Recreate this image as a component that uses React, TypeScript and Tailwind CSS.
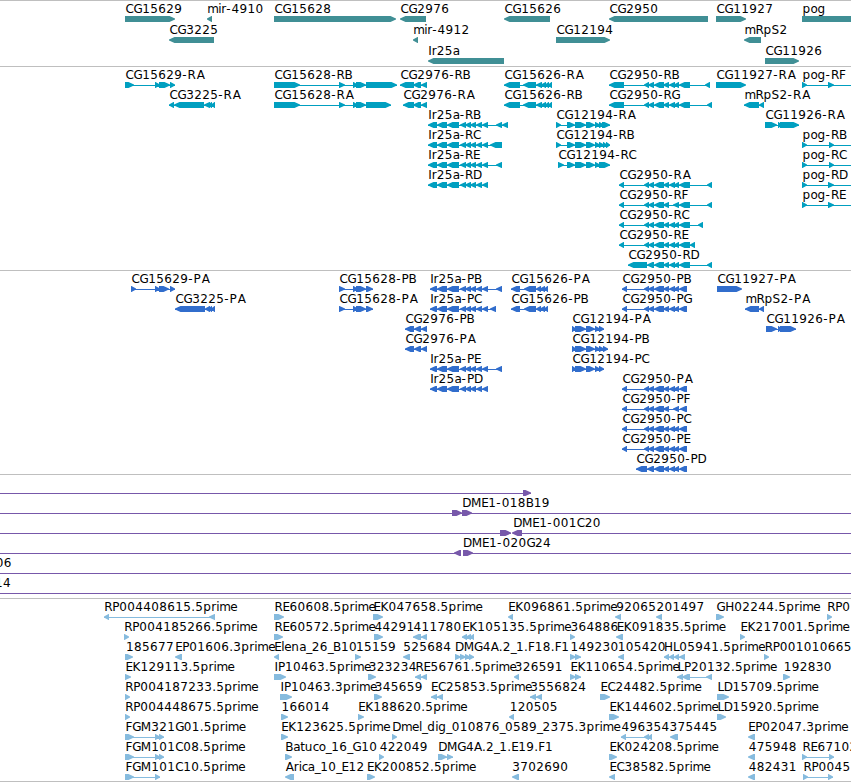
type Dir = 1 | -1;
type Span = [number, number];

interface Feature {
  row: number;
  label?: string;
  x: number;
  dir?: Dir;
  spans?: Span[];
  lines?: Span[];
}

interface TrackData {
  name: string;
  height: number;
  pitch: number;
  color: string;
  features: Feature[];
}

// parses "125-134 155-160" into spans
const parse = (s: string): Span[] =>
  s
    .split(" ")
    .filter(Boolean)
    .map((p) => p.split("-").map(Number) as Span);

const f = (row: number, label: string, x: number, dir: Dir, blocks: string): Feature => {
  const spans = parse(blocks);
  const lines: Span[] = spans.length > 1 ? [[spans[0][0], spans[spans.length - 1][1]]] : [];
  return { row, label, x, dir, spans, lines };
};

const IR = "437-447 447-459 460-466 465-471 470-476 476-482 482-488";
const CG2950 = "644-649 648-654 654-664 663-669 669-675 674-679 679-690";
const CG2950_RF = "644-649 648-654 654-664 663-669 673-679 679-690";
const CG2950_P = "644-649 648-654 654-664 663-669 669-675 674-679 679-687";
const CG2950_PF = "644-649 648-654 654-664 663-669 673-679 680-687";
const CG15626_R = "504-520 523-536 536-542 541-546 545-549 548-552";
const CG15626_P = "511-520 524-536 536-541 540-545 544-548";

const genes: Feature[] = [
  f(0, "CG15629", 125, 1, "125-175"),
  f(0, "mir-4910", 206.6, -1, "207-212"),
  f(0, "CG15628", 274, 1, "274-396"),
  f(0, "CG2976", 400, -1, "400-426"),
  f(0, "CG15626", 504, -1, "504-550"),
  f(0, "CG2950", 609, -1, "609-708"),
  f(0, "CG11927", 716, 1, "716-746"),
  f(0, "pog", 802, 1, "802-880"),
  f(1, "CG3225", 169, -1, "169-214"),
  f(1, "mir-4912", 412.6, -1, "413-418"),
  f(1, "CG12194", 556, 1, "556-610"),
  f(1, "mRpS2", 744, -1, "744-761"),
  f(2, "Ir25a", 427.7, -1, "428-504"),
  f(2, "CG11926", 765, 1, "765-799"),
];

const transcripts: Feature[] = [
  f(0, "CG15629-RA", 125, 1, "125-134 155-160 159-170 170-175"),
  f(0, "CG15628-RB", 274, 1, "274-300 339-345 353-358 356-366 366-397"),
  f(0, "CG2976-RB", 400, -1, "400-414 413-421 421-427"),
  f(0, "CG15626-RA", 504, -1, CG15626_R),
  f(0, "CG2950-RB", 609, -1, "609-624 " + CG2950 + " 705-710"),
  f(0, "CG11927-RA", 716, 1, "716-746"),
  f(0, "pog-RF", 802, 1, "802-807 828-834 870-880"),
  f(1, "CG3225-RA", 169, -1, "169-174 174-204 204-210 208-212 211-215"),
  f(1, "CG15628-RA", 274, 1, "274-300 339-345 353-358 356-366 366-391"),
  f(1, "CG2976-RA", 403, -1, "403-414 413-421 421-427"),
  f(1, "CG15626-RB", 504, -1, CG15626_R),
  f(1, "CG2950-RG", 609, -1, "609-624 " + CG2950 + " 707-712"),
  f(1, "mRpS2-RA", 744, -1, "744-759 759-764"),
  f(2, "Ir25a-RB", 427.7, -1, "428-437 " + IR + " 496-502 502-508"),
  f(2, "CG12194-RA", 556, 1, "556-561 567-575 575-586 586-595 595-600 599-604 602-610"),
  f(2, "CG11926-RA", 765, 1, "765-777 778-782 780-799"),
  f(3, "Ir25a-RC", 427.7, -1, "428-437 " + IR + " 490-502"),
  f(3, "CG12194-RB", 556, 1, "556-561 567-575 575-586 586-595 595-600 599-604 603-607 606-610"),
  f(3, "pog-RB", 802, 1, "802-807 829-834 870-880"),
  f(4, "Ir25a-RE", 427.7, -1, "428-437 " + IR + " 496-502"),
  f(4, "CG12194-RC", 558, 1, "558-564 567-575 575-586 586-595 595-600 599-610"),
  f(4, "pog-RC", 802, 1, "802-807 829-834 870-880"),
  f(5, "Ir25a-RD", 427.7, -1, "428-437 " + IR),
  f(5, "CG2950-RA", 619, -1, "619-624 " + CG2950 + " 707-712"),
  f(5, "pog-RD", 802, 1, "802-807 828-834 870-880"),
  f(6, "CG2950-RF", 619, -1, "619-624 " + CG2950_RF + " 707-712"),
  f(6, "pog-RE", 802, 1, "802-807 828-834 870-880"),
  f(7, "CG2950-RC", 619, -1, "619-624 " + CG2950 + " 698-703"),
  f(8, "CG2950-RE", 619, -1, "619-624 " + CG2950 + " 690-695"),
  f(9, "CG2950-RD", 628, -1, "628-647 647-654 654-664 663-669 669-675 674-679 679-690 707-712"),
];

const proteins: Feature[] = [
  f(0, "CG15629-PA", 131, 1, "131-136 155-160 159-169 170-175"),
  f(0, "CG15628-PB", 339, 1, "339-345 353-358 356-366 366-373"),
  f(0, "Ir25a-PB", 429.6, -1, "430-437 " + IR + " 496-502"),
  f(0, "CG15626-PA", 511, -1, CG15626_P),
  f(0, "CG2950-PB", 622, -1, "622-627 " + CG2950_P),
  f(0, "CG11927-PA", 717, 1, "717-742"),
  f(1, "CG3225-PA", 175, -1, "175-205 205-210 208-212 211-215"),
  f(1, "CG15628-PA", 339, 1, "339-345 353-358 356-366 366-373"),
  f(1, "Ir25a-PC", 429.6, -1, "430-437 " + IR + " 490-496"),
  f(1, "CG15626-PB", 511, -1, CG15626_P),
  f(1, "CG2950-PG", 622, -1, "622-627 " + CG2950_P),
  f(1, "mRpS2-PA", 745, -1, "745-759 759-764"),
  f(2, "CG2976-PB", 405, -1, "405-414 414-421 421-427"),
  f(2, "CG12194-PA", 572, 1, "572-576 575-586 586-595 595-600 599-604"),
  f(2, "CG11926-PA", 766, 1, "766-777 778-782 780-796"),
  f(3, "CG2976-PA", 405, -1, "405-414 414-421 421-427"),
  f(3, "CG12194-PB", 572, 1, "572-576 575-586 586-595 595-600 599-604 603-608"),
  f(4, "Ir25a-PE", 429.6, -1, "430-437 " + IR + " 496-502"),
  f(4, "CG12194-PC", 572, 1, "572-576 575-586 586-595 595-600 599-604"),
  f(5, "Ir25a-PD", 429.6, -1, "430-437 " + IR),
  f(5, "CG2950-PA", 622, -1, "622-627 " + CG2950_P),
  f(6, "CG2950-PF", 622, -1, "622-627 " + CG2950_PF),
  f(7, "CG2950-PC", 622, -1, "622-627 " + CG2950_P),
  f(8, "CG2950-PE", 622, -1, "622-627 " + CG2950_P),
  f(9, "CG2950-PD", 636, -1, "636-647 647-654 654-664 663-669 669-675 674-679 679-687"),
];

const clones: Feature[] = [
  { row: 0, x: 0, dir: 1, spans: [[523, 531]], lines: [[0, 531]] },
  { row: 1, label: "DME1-018B19", x: 461.6, dir: 1, spans: [[452, 462], [462, 472]], lines: [[0, 851]] },
  { row: 2, x: 0, dir: 1, spans: [[500, 511]], lines: [[0, 511]] },
  { row: 2, label: "DME1-001C20", x: 512.6, dir: -1, spans: [[512, 522]], lines: [[513, 851]] },
  { row: 3, x: 0, dir: -1, spans: [[454, 461]], lines: [[0, 461]] },
  { row: 3, label: "DME1-020G24", x: 462.4, dir: 1, spans: [[463, 473]], lines: [[463, 851]] },
  { row: 4, label: "06", x: -4.8, lines: [[0, 851]] },
  { row: 5, label: "14", x: -5.6, lines: [[0, 851]] },
];

const ests: Feature[] = [
  f(0, "RP004408615.5prime", 103.6, -1, "104-109 209-215"),
  f(0, "RE60608.5prime", 274, 1, "274-284"),
  f(0, "EK047658.5prime", 373, 1, "373-383"),
  f(0, "EK096861.5prime", 507.6, -1, "508-513"),
  f(0, "92065", 615.6, -1, "615-621"),
  f(0, "201497", 655.8, -1, "656-662"),
  f(0, "GH02244.5prime", 716, 1, "716-724"),
  f(0, "RP0", 826.6, 1, "827-832"),
  f(1, "RP004185266.5prime", 123.6, 1, "124-129"),
  f(1, "RE60572.5prime", 274, 1, "274-283"),
  f(1, "44291", 374, 1, "374-383"),
  f(1, "411780", 413, -1, "413-421 421-427"),
  f(1, "EK105135.5prime", 461.6, -1, "462-467 466-471 470-474"),
  f(1, "364886", 570, 1, "570-575"),
  f(1, "EK091835.5prime", 616.2, -1, "616-623"),
  f(1, "EK217001.5prime", 739.8, 1, "740-745"),
  f(2, "185677", 125.3, 1, "125-133"),
  f(2, "EP01606.3prime", 174.7, -1, "175-182"),
  f(2, "Elena_26_B10", 273.7, -1, "274-279"),
  f(2, "15159", 355.4, 1, "355-361"),
  f(2, "525684", 402.6, -1, "403-410"),
  f(2, "DMG4A.2_1.F18.F1", 454.4, 1, "455-461 460-466 465-470 469-474"),
  f(2, "149230", 570, 1, "570-576 575-581"),
  f(2, "105420", 617.2, -1, "618-624"),
  f(2, "HL05941.5prime", 663.4, -1, "664-669 669-674 674-679 679-685"),
  f(2, "RP001010665", 764.2, 1, "764-769"),
  f(3, "EK129113.5prime", 125, 1, "125-131"),
  f(3, "IP10463.5prime", 274, 1, "274-286"),
  f(3, "323234", 368.2, 1, "368-376"),
  f(3, "RE56761.5prime", 415, -1, "415-421 421-427"),
  f(3, "326591", 514.2, -1, "514-519"),
  f(3, "EK110654.5prime", 569.8, 1, "570-576 575-581"),
  f(3, "LP20132.5prime", 677, -1, "677-683 682-690 706-712"),
  f(3, "192830", 783.2, 1, "783-790"),
  f(4, "RP004187233.5prime", 124.7, 1, "125-130"),
  f(4, "IP10463.3prime", 280, 1, "280-292"),
  f(4, "345659", 374.2, 1, "374-382"),
  f(4, "EC25853.5prime", 430.4, -1, "431-437 437-443"),
  f(4, "3556824", 529.6, -1, "530-536 536-542"),
  f(4, "EC24482.5prime", 599.8, 1, "600-610"),
  f(4, "LD15709.5prime", 716.8, 1, "717-729"),
  f(5, "RP004448675.5prime", 124.7, 1, "125-130"),
  f(5, "166014", 281, 1, "281-288"),
  f(5, "EK188620.5prime", 357.7, 1, "358-364"),
  f(5, "120505", 509.2, -1, "509-514"),
  f(5, "EK144602.5prime", 609, 1, "609-619"),
  f(5, "LD15920.5prime", 716.8, 1, "717-726"),
  f(6, "FGM321G01.5prime", 125, 1, "125-134 155-160 159-164"),
  f(6, "EK123625.5prime", 280.6, 1, "281-288"),
  f(6, "Dmel_dig_010876_0589_2375.3prime", 391.6, 1, "392-397"),
  f(6, "496354", 621, -1, "621-626 644-649 648-652"),
  f(6, "375445", 669, -1, "670-678"),
  f(6, "EP02047.3prime", 747.6, -1, "748-755"),
  f(7, "FGM101C08.5prime", 125, 1, "125-134 155-160 159-164"),
  f(7, "Batuco_16_G10", 284.6, 1, "285-292"),
  f(7, "422049", 379.2, 1, "379-384"),
  f(7, "DMG4A.2_1.E19.F1", 437.6, 1, "438-447 447-453"),
  f(7, "EK024208.5prime", 609, 1, "609-617"),
  f(7, "475948", 748.2, -1, "748-755"),
  f(7, "RE67102", 801.8, 1, "802-807 829-834"),
  f(8, "FGM101C10.5prime", 125, 1, "125-134 155-160"),
  f(8, "Arica_10_E12", 285.2, -1, "285-294"),
  f(8, "EK200852.5prime", 366.4, 1, "367-375"),
  f(8, "3702690", 511.6, -1, "512-519"),
  f(8, "EC38582.5prime", 609, -1, "609-615"),
  f(8, "482431", 748.2, -1, "748-755"),
  f(8, "RP0045", 802.8, 1, "803-808 828-833"),
];

const tracks: TrackData[] = [
  { name: "Gene span", height: 66, pitch: 21, color: "#408f95", features: genes },
  { name: "Transcript", height: 204, pitch: 20, color: "#009fc0", features: transcripts },
  { name: "CDS", height: 204, pitch: 20, color: "#316dcc", features: proteins },
  { name: "Clones", height: 124, pitch: 20, color: "#7758aa", features: clones },
  { name: "ESTs", height: 184, pitch: 20, color: "#86bbde", features: ests },
];

// label advances in px, digits are all 8 wide
const ADV: Record<string, number> = {
  A: 8, B: 8, C: 8, D: 8.7, E: 7, F: 6.6, G: 8.6, H: 9, I: 3.4, K: 8, L: 6.3, M: 10.4, P: 7, R: 8, S: 8,
  a: 7, c: 6, d: 8, e: 7, g: 8, i: 3, l: 3, m: 11, n: 8, o: 7, p: 8, r: 5, t: 4.6, u: 8,
  "-": 5.4, "_": 5.4, ".": 4,
};

const LABEL_INSET = 0.6;

function glyphPositions(label: string, x: number) {
  let at = x + LABEL_INSET;
  return label
    .split("")
    .map((ch, i) => {
      // a closing A sits a little apart from the R or P before it
      if (ch === "A" && /[RP]/.test(label[i - 1] ?? "")) at += 1.2;
      const here = at;
      at += ADV[ch] ?? 8;
      return here.toFixed(1);
    })
    .join(" ");
}

function blockPath([a, b]: Span, dir: Dir, top: number) {
  const head = Math.min(6, b - a);
  const mid = top + 3;
  const bottom = top + 6;
  return dir === 1
    ? `M${a} ${top}H${b - head + 0.5}L${b} ${mid - 0.5}V${mid + 0.5}L${b - head + 0.5} ${bottom}H${a}Z`
    : `M${b} ${top}H${a + head - 0.5}L${a} ${mid - 0.5}V${mid + 0.5}L${a + head - 0.5} ${bottom}H${b}Z`;
}

function Track({ track }: { track: TrackData }) {
  return (
    <section aria-label={track.name} className="w-full border-t border-[#bfbfbf]">
      <svg
        className="block w-full overflow-hidden"
        width={851}
        height={track.height - 1}
        viewBox={`0 1 851 ${track.height - 1}`}
      >
        {track.features.map((ft, i) => {
          const top = 16 + ft.row * track.pitch;
          return (
            <g key={i}>
              {ft.lines?.map(([a, b], n) => (
                <rect key={n} x={a} y={top + 3} width={b - a} height={1} fill={track.color} />
              ))}
              {ft.spans && (
                <path d={ft.spans.map((s) => blockPath(s, ft.dir ?? 1, top)).join("")} fill={track.color} />
              )}
              {ft.label && (
                <text
                  x={glyphPositions(ft.label, ft.x)}
                  y={top - 3}
                  className="fill-black font-['DejaVu_Sans',sans-serif] text-[12px]"
                >
                  {ft.label}
                </text>
              )}
            </g>
          );
        })}
      </svg>
    </section>
  );
}

export default function App() {
  return (
    <main className="flex h-[782px] w-[851px] flex-col overflow-hidden border-b border-[#bfbfbf] bg-white">
      {tracks.map((track) => (
        <Track key={track.name} track={track} />
      ))}
    </main>
  );
}
